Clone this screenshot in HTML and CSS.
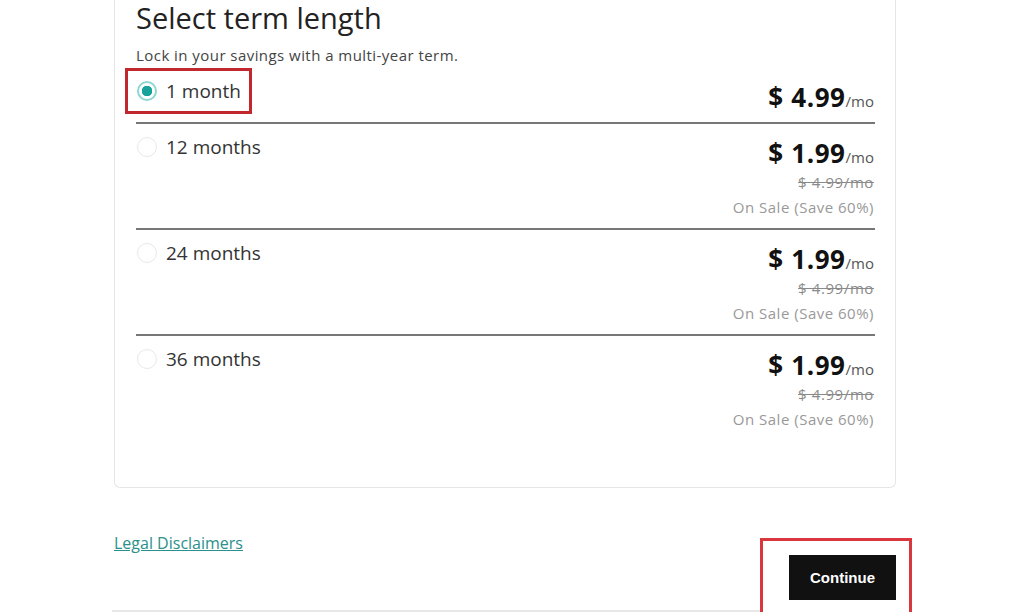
FILE: index.html
```html
<!DOCTYPE html>
<html lang="en">
<head>
<meta charset="utf-8">
<title>Select term length</title>
<link rel="stylesheet" href="styles.css">
</head>
<body>
<div class="page">
  <section class="card">
    <h1 class="title">Select term length</h1>
    <p class="subtitle">Lock in your savings with a multi-year term.</p>

    <div class="row">
      <label class="option highlight"><span class="radio checked"></span><span>1 month</span></label>
      <div class="prices">
        <div class="price"><span class="amount">$ 4.99</span><span class="per">/mo</span></div>
      </div>
    </div>

    <div class="row">
      <label class="option"><span class="radio"></span><span>12 months</span></label>
      <div class="prices">
        <div class="price"><span class="amount">$ 1.99</span><span class="per">/mo</span></div>
        <div class="was">$ 4.99/mo</div>
        <div class="sale">On Sale (Save 60%)</div>
      </div>
    </div>

    <div class="row">
      <label class="option"><span class="radio"></span><span>24 months</span></label>
      <div class="prices">
        <div class="price"><span class="amount">$ 1.99</span><span class="per">/mo</span></div>
        <div class="was">$ 4.99/mo</div>
        <div class="sale">On Sale (Save 60%)</div>
      </div>
    </div>

    <div class="row last">
      <label class="option"><span class="radio"></span><span>36 months</span></label>
      <div class="prices">
        <div class="price"><span class="amount">$ 1.99</span><span class="per">/mo</span></div>
        <div class="was">$ 4.99/mo</div>
        <div class="sale">On Sale (Save 60%)</div>
      </div>
    </div>
  </section>

  <footer class="footer">
    <a class="legal" href="#">Legal Disclaimers</a>
    <div class="cta-box"><button class="continue">Continue</button></div>
  </footer>
</div>
</body>
</html>
```
FILE: styles.css
```css
* { box-sizing: border-box; }
html, body { margin: 0; padding: 0; background: #fff; }
body {
  font-family: "Open Sans", "Noto Sans", sans-serif;
  color: #222;
  overflow: hidden;
}
.page {
  margin-left: 114px;
  width: 782px;
}
.card {
  border: 1px solid #e6e6e6;
  border-top: none;
  border-radius: 0 0 6px 6px;
  padding: 1px 20px 47px 21px;
}
.title {
  margin: 0;
  font-size: 29px;
  line-height: 34px;
  font-weight: 400;
  color: #222;
}
.subtitle {
  margin: 10px 0 3px;
  font-size: 15px;
  line-height: 20px;
  letter-spacing: 0.45px;
  color: #444;
}
.row {
  display: flex;
  justify-content: space-between;
  align-items: flex-start;
  padding: 11px 0 8px;
  border-bottom: 2px solid #777;
}
.row.last { border-bottom: none; }
.option {
  display: inline-flex;
  align-items: center;
  gap: 9px;
  font-size: 19px;
  line-height: 24px;
  color: #333;
  padding-left: 1px;
}
.option.highlight {
  outline: 3px solid #c1272d;
  outline-offset: 8px;
}
.radio {
  width: 20px;
  height: 20px;
  border-radius: 50%;
  border: 1px solid #e8e8e8;
  background: #fff;
  flex: none;
}
.radio.checked {
  border: 2px solid #8fd6d3;
  background: radial-gradient(circle, #17a39b 0 5px, #fff 5.5px);
}
.prices {
  margin-top: 3px;
  display: flex;
  flex-direction: column;
  align-items: flex-end;
  margin-right: 1px;
}
.price {
  display: flex;
  align-items: baseline;
  height: 32px;
  white-space: nowrap;
}
.amount {
  font-size: 26px;
  line-height: 30px;
  font-weight: 700;
  letter-spacing: 0.6px;
  color: #111;
}
.per {
  font-size: 15px;
  line-height: 16px;
  color: #555;
}
.was {
  font-size: 15px;
  line-height: 25px;
  letter-spacing: 0.6px;
  color: #8a8a8a;
  text-decoration: line-through;
}
.sale {
  font-size: 15px;
  line-height: 25px;
  letter-spacing: 0.5px;
  color: #999;
}
.footer {
  display: flex;
  justify-content: space-between;
  align-items: flex-start;
  margin-top: 45px;
  margin-right: -16px;
  margin-left: -2px;
  border-bottom: 2px solid #e8e8e8;
}
.legal {
  margin-left: 2px;
  font-size: 16px;
  line-height: 20px;
  color: #2b8f8a;
  text-decoration: underline;
}
.cta-box {
  margin-top: 5px;
  margin-bottom: -8px;
  border: 3px solid #d9363e;
  background: #fff;
  padding: 14px 13px 15px 26px;
}
.continue {
  display: block;
  width: 107px;
  height: 45px;
  background: #111;
  color: #fff;
  border: none;
  font-family: "Liberation Sans", Arial, sans-serif;
  font-weight: 700;
  font-size: 15px;
  padding: 0;
}
```
